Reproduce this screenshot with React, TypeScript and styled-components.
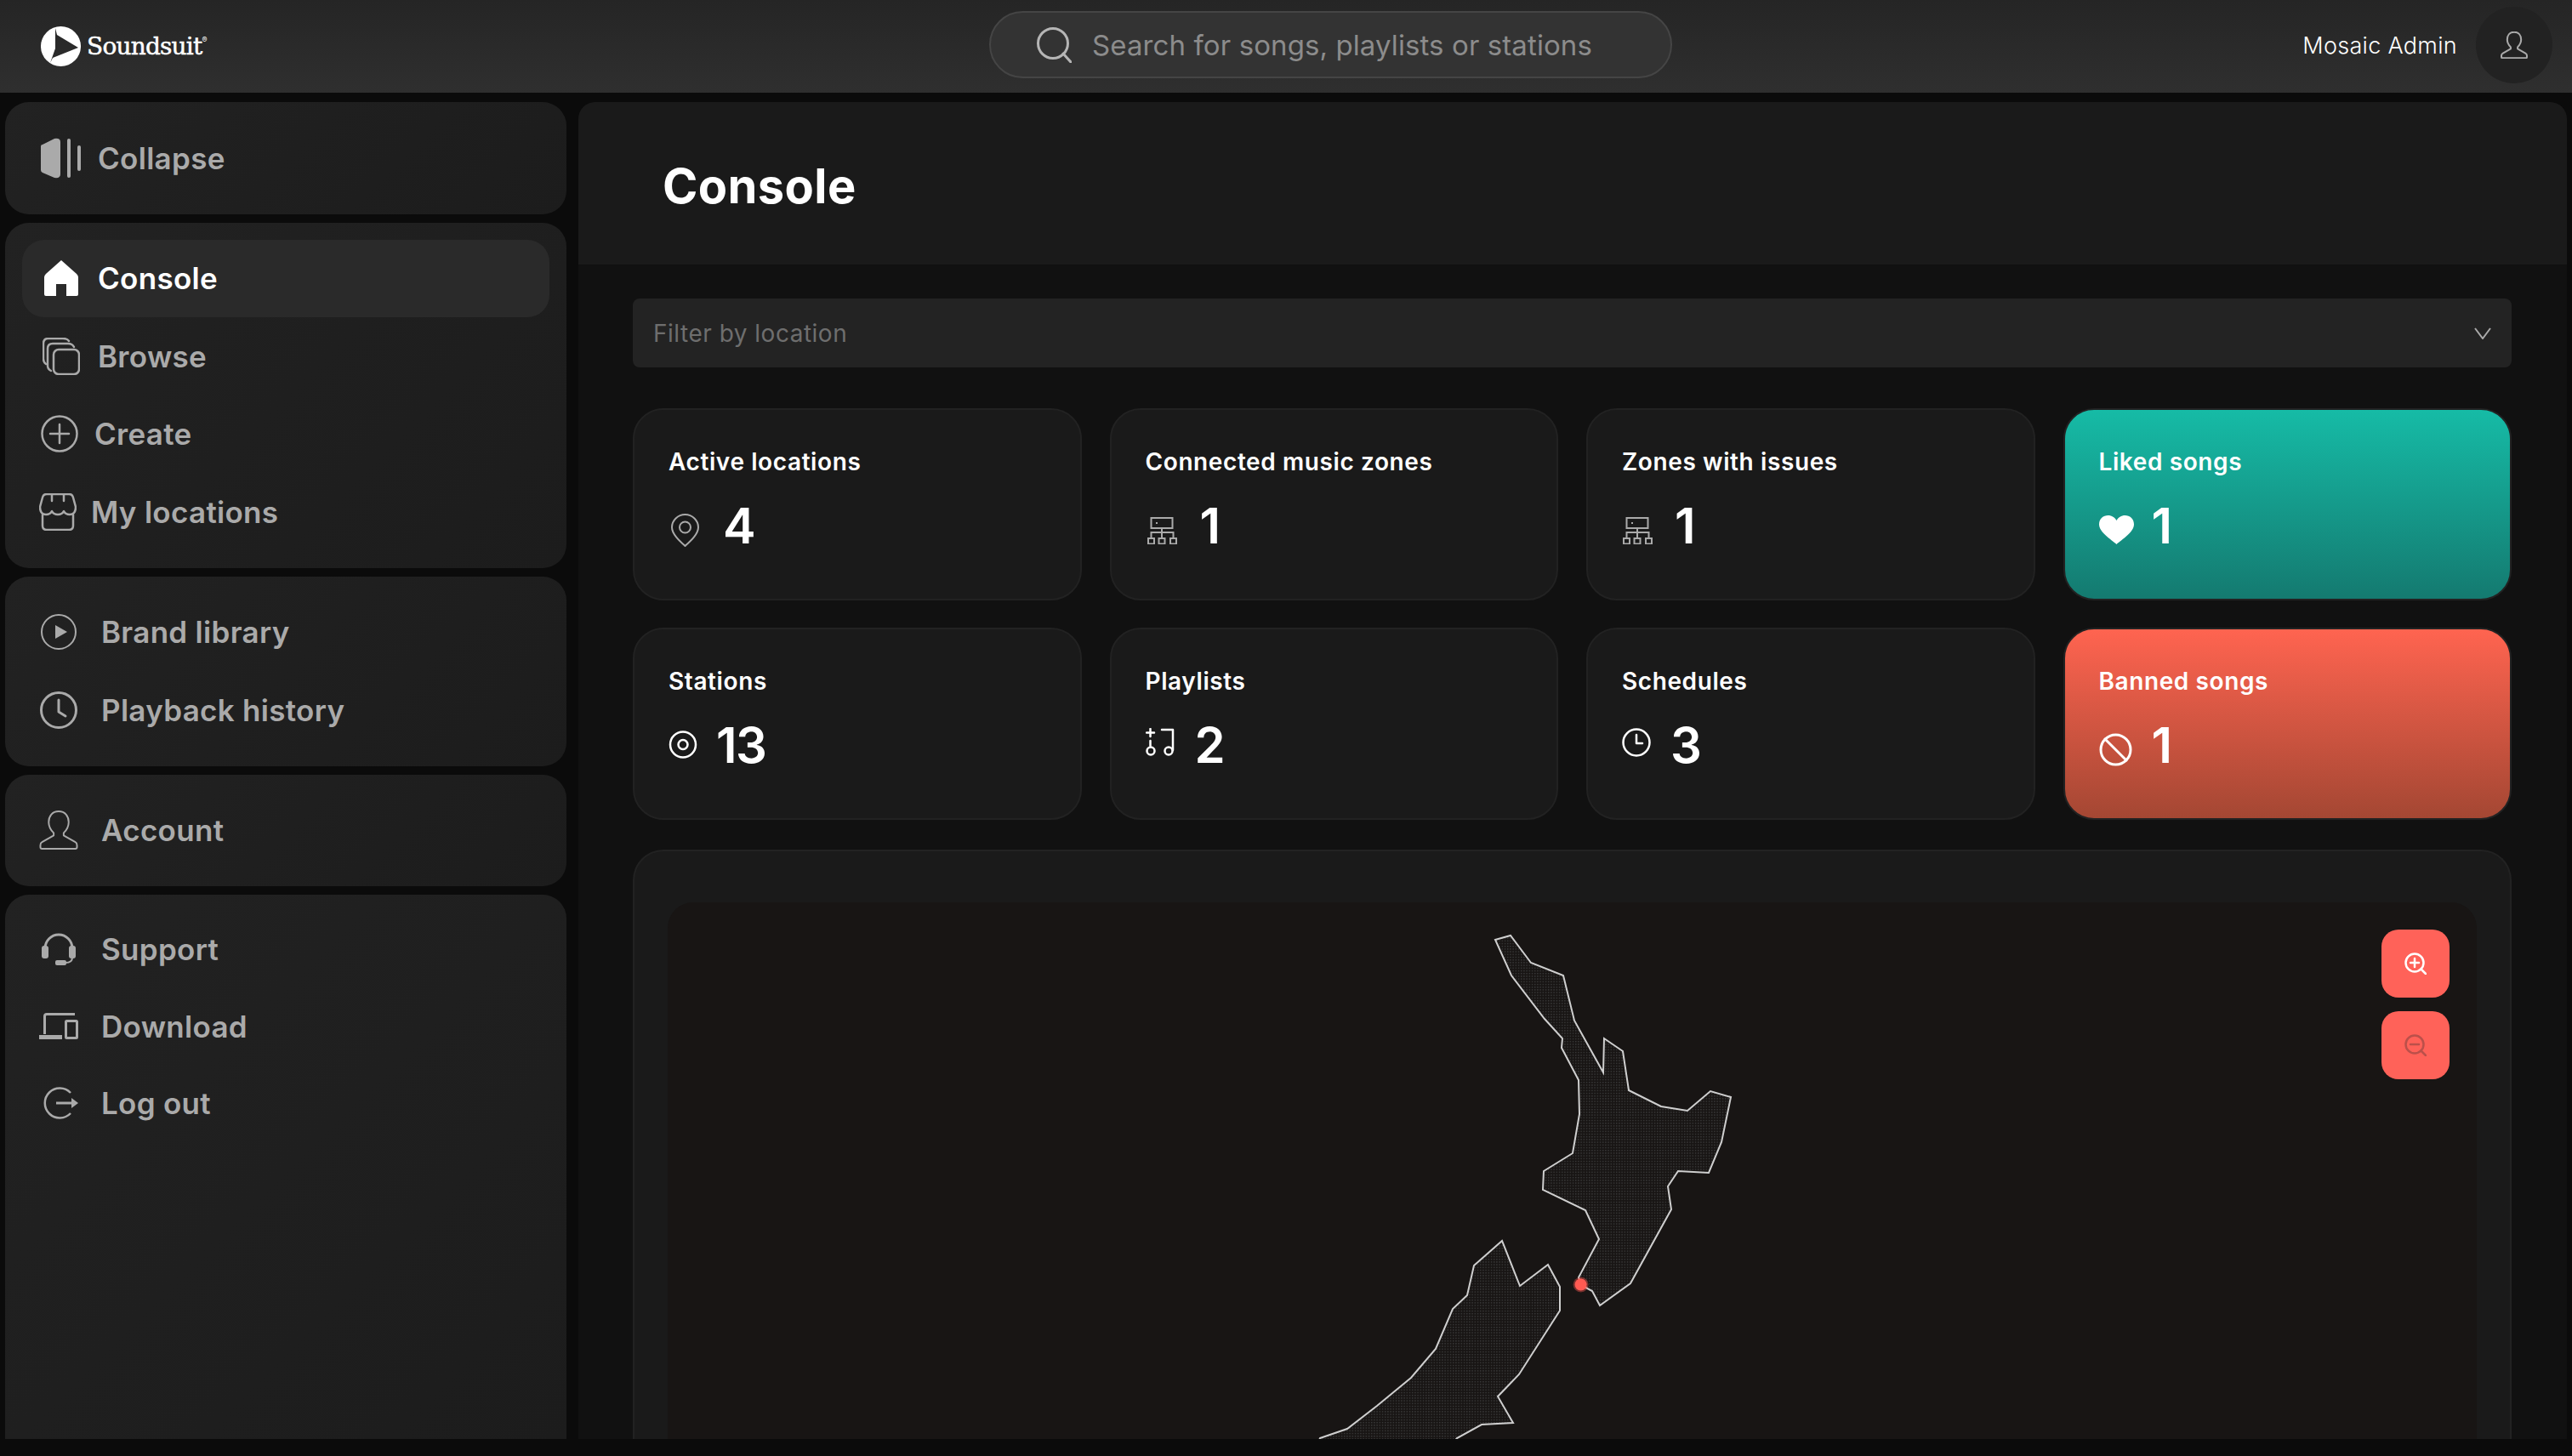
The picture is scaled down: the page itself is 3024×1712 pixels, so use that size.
import React from 'react';
import styled, { createGlobalStyle } from 'styled-components';

const GlobalStyle = createGlobalStyle`
  html, body {
    margin: 0;
    padding: 0;
    background: #0b0b0b;
    font-family: Inter, 'Liberation Sans', sans-serif;
  }
`;

const Shell = styled.div`
  width: 3024px;
  height: 1692px;
  display: flex;
  flex-direction: column;
  overflow: hidden;
`;

const TopBar = styled.header`
  height: 109px;
  flex: none;
  display: grid;
  grid-template-columns: 1163px 803px 1fr;
  align-items: center;
  background: linear-gradient(180deg, #252525, #2f2f2f);
`;

const Brand = styled.div`
  display: flex;
  align-items: center;
  gap: 7px;
  padding-left: 48px;
  color: #fff;
`;

const BrandName = styled.span`
  font-family: 'DejaVu Serif', serif;
  font-size: 28px;
  font-weight: 400;
  letter-spacing: -0.8px;
  -webkit-text-stroke: 0.5px #fff;

  sup {
    font-family: Inter, sans-serif;
    font-size: 9px;
    font-weight: 400;
    letter-spacing: 0;
    vertical-align: 14px;
    line-height: 0;
    -webkit-text-stroke: 0;
  }
`;

const Search = styled.div`
  height: 79px;
  margin-bottom: 4px;
  box-sizing: border-box;
  display: flex;
  align-items: center;
  gap: 24px;
  padding-left: 53px;
  background: #333;
  border: 2px solid #454545;
  border-radius: 40px;
  color: #8c8c8c;
  font-size: 33px;
  letter-spacing: 0.1px;
`;

const UserArea = styled.div`
  display: flex;
  justify-content: flex-end;
  align-items: center;
  gap: 22px;
  padding-right: 23px;
  margin-bottom: 3px;
  color: #fff;
  font-size: 27px;
  font-weight: 300;
  letter-spacing: 0.3px;
`;

const Avatar = styled.div`
  width: 90px;
  height: 90px;
  border-radius: 50%;
  background: #222;
  color: #aaa;
  display: flex;
  align-items: center;
  justify-content: center;
`;

const Body = styled.div`
  flex: 1;
  min-height: 0;
  display: flex;
  gap: 14px;
  padding: 11px 6px 0;
`;

const Sidebar = styled.nav`
  width: 660px;
  flex: none;
  display: flex;
  flex-direction: column;
  gap: 10px;
`;

const Panel = styled.div<{ $last?: boolean }>`
  padding: ${p => (p.$last ? '19px' : '20px')} 20px 20px;
  border-radius: ${p => (p.$last ? '28px 28px 0 0' : '28px')};
  background: linear-gradient(135deg, #222, #1c1c1c);
  flex: ${p => (p.$last ? 1 : 'none')};
`;

const NavItem = styled.div<{ $active?: boolean; $tight?: boolean }>`
  height: ${p => (p.$tight ? 90.5 : 91.5)}px;
  display: flex;
  align-items: center;
  padding-left: 20px;
  border-radius: 26px;
  background: ${p => (p.$active ? '#2a2a2a' : 'transparent')};
  color: ${p => (p.$active ? '#fff' : '#aaa')};
  font-size: 35px;
  font-weight: 600;
  letter-spacing: 0.3px;
`;

const NavIcon = styled.span<{ $slot: number; $inset: number }>`
  width: ${p => p.$slot}px;
  padding-left: ${p => p.$inset}px;
  box-sizing: border-box;
  flex: none;
  display: flex;
  align-items: center;
`;

const Main = styled.main`
  flex: 1;
  min-width: 0;
  display: flex;
  flex-direction: column;
  background: #111;
  border-radius: 20px 20px 0 0;
  overflow: hidden;
`;

const PageHeader = styled.div`
  height: 191px;
  box-sizing: border-box;
  flex: none;
  display: flex;
  align-items: center;
  padding: 6px 0 0 99px;
  background: #1a1a1a;
`;

const Title = styled.h1`
  margin: 0;
  color: #fff;
  font-size: 56px;
  font-weight: 700;
  letter-spacing: 0.4px;
`;

const Content = styled.div`
  flex: 1;
  min-height: 0;
  display: flex;
  flex-direction: column;
  padding: 40px 65px 0 64px;
`;

const Filter = styled.div`
  height: 81px;
  flex: none;
  display: flex;
  align-items: center;
  justify-content: space-between;
  padding: 0 24px;
  background: #232323;
  border-radius: 8px;
  color: #6e6e6e;
  font-size: 28px;
  letter-spacing: 0.5px;
`;

const Grid = styled.div`
  margin-top: 48px;
  flex: none;
  display: grid;
  grid-template-columns: repeat(4, 1fr);
  grid-auto-rows: 226px;
  gap: 32px 33px;
`;

const Card = styled.div<{ $tone?: 'green' | 'red' }>`
  box-sizing: border-box;
  padding: 43px 40px 0;
  border: 2px solid #222;
  border-radius: 36px;
  color: #fff;
  background: ${p =>
    p.$tone === 'green'
      ? 'linear-gradient(180deg, #16bba6, #147a70)'
      : p.$tone === 'red'
        ? 'linear-gradient(180deg, #ff6450, #a44733)'
        : '#1a1a1a'};
`;

const CardTitle = styled.div`
  font-size: 28px;
  font-weight: 600;
  line-height: 36px;
  letter-spacing: 0.6px;
`;

const CardValue = styled.div`
  margin-top: 36px;
  display: flex;
  align-items: flex-end;
  font-size: 58px;
  font-weight: 600;
  line-height: 42px;
  letter-spacing: -1.5px;
`;

const CardIcon = styled.span<{ $slot: number; $inset: number; $drop: number }>`
  width: ${p => p.$slot}px;
  padding-left: ${p => p.$inset}px;
  margin-bottom: ${p => -p.$drop}px;
  box-sizing: border-box;
  flex: none;
  display: flex;
`;

const MapCard = styled.section`
  margin-top: 35px;
  flex: 1;
  min-height: 0;
  padding: 60px 39px 0;
  background: #1a1a1a;
  border: 2px solid #222;
  border-bottom: 0;
  border-radius: 36px 36px 0 0;
  display: flex;
`;

const MapArea = styled.div`
  flex: 1;
  position: relative;
  overflow: hidden;
  background: #181514;
  border-radius: 30px 30px 0 0;
`;

const MapDrawing = styled.svg`
  position: absolute;
  left: 715px;
  top: 19px;
`;

const ZoomControls = styled.div`
  position: absolute;
  top: 32px;
  right: 32px;
  display: flex;
  flex-direction: column;
  gap: 16px;
`;

const ZoomButton = styled.div<{ $muted?: boolean }>`
  width: 80px;
  height: 80px;
  border-radius: 20px;
  background: #ff6259;
  color: ${p => (p.$muted ? '#bb504a' : '#fff')};
  display: flex;
  align-items: center;
  justify-content: center;
`;

const Outline = styled.svg.attrs({ fill: 'none', stroke: 'currentColor', strokeLinecap: 'round', strokeLinejoin: 'round' })`
  display: block;
  flex: none;
`;

const LogoMark = () => (
  <svg width="47" height="47" viewBox="0 0 47 47">
    <path
      fill="#fff"
      fillRule="evenodd"
      d="M23.5 0a23.5 23.5 0 1 1 0 47a23.5 23.5 0 1 1 0-47ZM17 2L19 10L44 25L14 37L11 43L17 26Z"
    />
  </svg>
);

const CollapseIcon = () => (
  <svg width="48" height="48" viewBox="0 0 48 48" fill="currentColor">
    <path d="M2 8L16 1Q23 0 23 5V43Q23 48 16 47L2 41Q0 40 0 38V10Q0 8 2 8Z" />
    <rect x="31" y="1" width="4" height="46" rx="2" />
    <rect x="43" y="9" width="4" height="30" rx="2" />
  </svg>
);

const HomeIcon = () => (
  <svg width="40" height="42" viewBox="0 0 40 42" fill="currentColor">
    <path d="M20 0L38 16Q40 18 40 20V40Q40 42 38 42H26V28H14V42H2Q0 42 0 40V20Q0 18 2 16Z" />
  </svg>
);

const BrowseIcon = () => (
  <Outline width="44" height="44" viewBox="0 0 44 44" strokeWidth="2.5">
    <rect x="13" y="14" width="30" height="29" rx="6" />
    <path d="M10 39Q6 37 6 33V13Q6 7 12 7H30Q35 7 37 11" />
    <path d="M4 31Q1 29 1 25V7Q1 1 7 1H24Q29 1 31 4" />
  </Outline>
);

const CreateIcon = () => (
  <Outline width="44" height="44" viewBox="0 0 44 44" strokeWidth="2.5">
    <circle cx="22" cy="22" r="20.5" />
    <path d="M22 11V33M11 22H33" />
  </Outline>
);

const StoreIcon = () => (
  <Outline width="44" height="44" viewBox="0 0 44 44" strokeWidth="2.5">
    <path d="M9 1H35Q39 1 40 5L43 16Q43 25 36 25Q31 25 29 21Q27 25 22 25Q17 25 15 21Q13 25 8 25Q1 25 1 16L4 5Q5 1 9 1Z" />
    <path d="M4 25V38Q4 43 9 43H35Q40 43 40 38V25" />
    <path d="M15 1V9M29 1V9" />
  </Outline>
);

const PlayCircleIcon = () => (
  <svg width="42" height="42" viewBox="0 0 42 42">
    <circle cx="21" cy="21" r="20" fill="none" stroke="currentColor" strokeWidth="2" />
    <path d="M17 13L31 21L17 29Z" fill="currentColor" />
  </svg>
);

const HistoryIcon = () => (
  <Outline width="44" height="44" viewBox="0 0 44 44" strokeWidth="3">
    <circle cx="22" cy="22" r="20.5" />
    <path d="M22 10V24L30 29" />
  </Outline>
);

const PersonIcon = ({ size = 46 }: { size?: number }) => (
  <Outline width={size} height={size} viewBox="0 0 46 47" strokeWidth={size < 40 ? 3 : 2}>
    <path d="M23 1C15 1 11 7 11 14C11 20 14 24 17 27V30L3 38Q1 39 1 42V44Q1 46 3 46H43Q45 46 45 44V42Q45 39 43 38L29 30V27C32 24 35 20 35 14C35 7 31 1 23 1Z" />
  </Outline>
);

const HeadsetIcon = () => (
  <svg width="40" height="38" viewBox="0 0 40 38" fill="currentColor">
    <path d="M4 18A16 16 0 0 1 36 18" fill="none" stroke="currentColor" strokeWidth="3" />
    <rect x="0" y="15" width="8" height="15" rx="3" />
    <rect x="32" y="15" width="8" height="15" rx="3" />
    <path d="M36 29Q36 35 28 35" fill="none" stroke="currentColor" strokeWidth="2" />
    <rect x="16" y="32" width="13" height="6" rx="2" />
  </svg>
);

const DevicesIcon = () => (
  <svg width="46" height="31" viewBox="0 0 46 31" fill="none" stroke="currentColor" strokeWidth="3">
    <path d="M6.5 25V4Q6.5 1.5 9 1.5H42" />
    <path d="M0 28.5H27" strokeWidth="5" />
    <rect x="31.500" y="9.500" width="13" height="20" rx="1" />
  </svg>
);

const LogoutIcon = () => (
  <svg width="42" height="38" viewBox="0 0 42 38" fill="none" stroke="currentColor" strokeWidth="2.5">
    <path d="M33 7A17.500 17.500 0 1 0 33 31" />
    <path d="M16 19H36" strokeWidth="3" />
    <path d="M34 13L42 19L34 25Z" fill="currentColor" stroke="none" />
  </svg>
);

const PinIcon = () => (
  <Outline width="33" height="39" viewBox="0 0 33 39" strokeWidth="2" color="#aaa">
    <path d="M16.500 1C8 1 1 8 1 16C1 24 10 32 16.500 38C23 32 32 24 32 16C32 8 25 1 16.500 1Z" />
    <circle cx="16.500" cy="16" r="6.500" />
  </Outline>
);

const ServerIcon = () => (
  <svg width="35" height="32" viewBox="0 0 35 32" fill="none" stroke="#aaa" strokeWidth="2">
    <rect x="4.500" y="1" width="25" height="12" />
    <path d="M11 6V8M17 13V25M4.500 25V18H30.500V25" />
    <rect x="1" y="25" width="7" height="6.500" />
    <rect x="13.500" y="25" width="7" height="6.500" />
    <rect x="27" y="25" width="7" height="6.500" />
  </svg>
);

const DiscIcon = () => (
  <Outline width="34" height="33" viewBox="0 0 34 33" strokeWidth="2.5">
    <circle cx="17" cy="16.500" r="15" />
    <circle cx="17" cy="16.500" r="5.500" />
  </Outline>
);

const PlaylistIcon = () => (
  <Outline width="34" height="33" viewBox="0 0 34 33" strokeWidth="2.500">
    <path d="M5.500 1V10M1 5.500H10M5.500 15V21M19 2H32V26" />
    <circle cx="6" cy="27" r="4.500" />
    <circle cx="27" cy="27" r="4.500" />
  </Outline>
);

const ClockIcon = () => (
  <Outline width="34" height="34" viewBox="0 0 34 34" strokeWidth="2.500">
    <circle cx="17" cy="17" r="15.500" />
    <path d="M17 8V18H24" />
  </Outline>
);

const HeartIcon = () => (
  <svg width="41" height="34" viewBox="0 0 41 34" fill="#fff">
    <path d="M20.500 34C14 28 0 20 0 10.500C0 4 5 0 10.500 0C15 0 18.500 2.500 20.500 6C22.500 2.500 26 0 30.500 0C36 0 41 4 41 10.500C41 20 27 28 20.500 34Z" />
  </svg>
);

const BanIcon = () => (
  <Outline width="39" height="39" viewBox="0 0 39 39" strokeWidth="3">
    <circle cx="19.500" cy="19.500" r="17.500" />
    <path d="M7 7L32 32" />
  </Outline>
);

const Magnifier = ({ minus }: { minus?: boolean }) => (
  <Outline width="26" height="26" viewBox="0 0 26 26" strokeWidth="2.500">
    <circle cx="12" cy="12" r="10.500" />
    <path d="M19.500 19.500L25 25" />
    <path d={minus ? 'M7 12H17' : 'M7 12H17M12 7V17'} />
  </Outline>
);

const navGroups = [
  {
    items: [{ label: 'Collapse', icon: <CollapseIcon />, inset: 2, slot: 69 }],
  },
  {
    items: [
      { label: 'Console', icon: <HomeIcon />, inset: 6, slot: 69, active: true },
      { label: 'Browse', icon: <BrowseIcon />, inset: 4, slot: 69 },
      { label: 'Create', icon: <CreateIcon />, inset: 2, slot: 65 },
      { label: 'My locations', icon: <StoreIcon />, inset: 0, slot: 61 },
    ],
  },
  {
    items: [
      { label: 'Brand library', icon: <PlayCircleIcon />, inset: 2, slot: 73 },
      { label: 'Playback history', icon: <HistoryIcon />, inset: 1, slot: 73 },
    ],
  },
  {
    items: [{ label: 'Account', icon: <PersonIcon />, inset: 0, slot: 73 }],
  },
  {
    items: [
      { label: 'Support', icon: <HeadsetIcon />, inset: 3, slot: 73 },
      { label: 'Download', icon: <DevicesIcon />, inset: 0, slot: 73 },
      { label: 'Log out', icon: <LogoutIcon />, inset: 4, slot: 73 },
    ],
    last: true,
  },
];

const stats = [
  { title: 'Active locations', value: '4', icon: <PinIcon />, inset: 3, slot: 64, drop: 4 },
  { title: 'Connected music zones', value: '1', icon: <ServerIcon />, inset: 2, slot: 64, drop: 1 },
  { title: 'Zones with issues', value: '1', icon: <ServerIcon />, inset: 1, slot: 62, drop: 1 },
  { title: 'Liked songs', value: '1', icon: <HeartIcon />, slot: 62, inset: 0, drop: 1, tone: 'green' as const },
  { title: 'Stations', value: '13', icon: <DiscIcon />, inset: 0, slot: 56, drop: -5 },
  { title: 'Playlists', value: '2', icon: <PlaylistIcon />, inset: 0, slot: 58, drop: -8 },
  { title: 'Schedules', value: '3', icon: <ClockIcon />, inset: 0, slot: 57, drop: -7 },
  { title: 'Banned songs', value: '1', icon: <BanIcon />, slot: 62, inset: 0, drop: 4, tone: 'red' as const },
];

// traced from the reference, in a 600 x 632 box over the map
const northIsland =
  '258,25 276,20 300,52 338,67 351,120 385,181 386,141 408,156 415,202 453,221 484,226 511,203 535,210 524,263 509,299 473,297 461,315 465,342 417,429 381,455 372,438 359,431 356,422 380,377 364,343 314,319 315,297 349,276 357,230 356,190 336,152 337,141 316,118 277,67';
const southIsland =
  '52,611 84,600 119,573 159,540 188,506 208,459 225,443 233,408 266,379 287,432 320,407 334,433 334,461 286,536 261,562 279,593 242,595 213,611 190,640 40,640';

const App = () => (
  <Shell>
    <GlobalStyle />
    <TopBar>
      <Brand>
        <LogoMark />
        <BrandName>
          Soundsuit<sup>®</sup>
        </BrandName>
      </Brand>
      <Search>
        <svg width="42" height="42" viewBox="0 0 42 42" fill="none" stroke="#b5b5b5" strokeWidth="3" strokeLinecap="round">
          <circle cx="20" cy="19" r="17.500" />
          <path d="M32 31L41 41" />
        </svg>
        Search for songs, playlists or stations
      </Search>
      <UserArea>
        Mosaic Admin
        <Avatar>
          <PersonIcon size={32} />
        </Avatar>
      </UserArea>
    </TopBar>
    <Body>
      <Sidebar>
        {navGroups.map((group, i) => (
          <Panel key={i} $last={group.last}>
            {group.items.map(item => (
              <NavItem key={item.label} $active={'active' in item && item.active} $tight={group.last}>
                <NavIcon $slot={item.slot} $inset={item.inset}>
                  {item.icon}
                </NavIcon>
                {item.label}
              </NavItem>
            ))}
          </Panel>
        ))}
      </Sidebar>
      <Main>
        <PageHeader>
          <Title>Console</Title>
        </PageHeader>
        <Content>
          <Filter>
            Filter by location
            <svg width="20" height="14" viewBox="0 0 20 14" fill="none" stroke="#aaa" strokeWidth="2">
              <path d="M1 1L10 13L19 1" />
            </svg>
          </Filter>
          <Grid>
            {stats.map(stat => (
              <Card key={stat.title} $tone={stat.tone}>
                <CardTitle>{stat.title}</CardTitle>
                <CardValue>
                  <CardIcon $slot={stat.slot} $inset={stat.inset} $drop={stat.drop}>
                    {stat.icon}
                  </CardIcon>
                  {stat.value}
                </CardValue>
              </Card>
            ))}
          </Grid>
          <MapCard>
            <MapArea>
              <MapDrawing width="600" height="632" viewBox="0 0 600 632">
                <defs>
                  <pattern id="land" width="3.200" height="3.200" patternUnits="userSpaceOnUse">
                    <rect width="1.400" height="1.400" fill="#3a3a3a" />
                  </pattern>
                </defs>
                <polygon points={northIsland} fill="url(#land)" stroke="#cfcfcf" strokeWidth="2" />
                <polygon points={southIsland} fill="url(#land)" stroke="#cfcfcf" strokeWidth="2" />
                <circle cx="358.600" cy="430.500" r="9" fill="#ff5a52" opacity="0.4" />
                <circle cx="358.600" cy="430.500" r="7" fill="#ff5a52" />
              </MapDrawing>
              <ZoomControls>
                <ZoomButton>
                  <Magnifier />
                </ZoomButton>
                <ZoomButton $muted>
                  <Magnifier minus />
                </ZoomButton>
              </ZoomControls>
            </MapArea>
          </MapCard>
        </Content>
      </Main>
    </Body>
  </Shell>
);

export default App;
